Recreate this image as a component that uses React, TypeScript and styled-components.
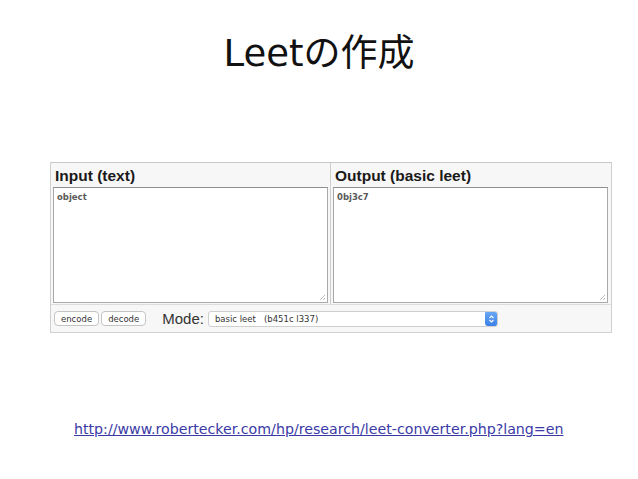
import React from "react";
import styled, { createGlobalStyle } from "styled-components";

const Global = createGlobalStyle`
  html, body { margin: 0; padding: 0; background: #ffffff; }
  #root { width: 638px; height: 479px; overflow: hidden; }
`;

const Slide = styled.div`
  width: 638px;
  height: 479px;
  display: flex;
  flex-direction: column;
  align-items: flex-start;
  background: #fff;
`;

const Title = styled.h1`
  margin: 31px 0 0 0;
  width: 638px;
  text-align: center;
  font-family: "DejaVu Sans", "Noto Sans CJK JP", sans-serif;
  font-weight: 400;
  font-size: 37px;
  line-height: 45px;
  color: #111;
`;

const Panel = styled.div`
  margin: 86px 0 0 50px;
  width: 560px;
  border: 1px solid #d0d0d0;
  border-top-color: #c8c8c8;
  background: #f7f7f7;
  display: flex;
  flex-direction: column;
`;

const Columns = styled.div`
  display: grid;
  grid-template-columns: 280px 280px;
`;

const Column = styled.div<{ $divider?: boolean }>`
  display: flex;
  flex-direction: column;
  padding: 0 3px 1px 2px;
  border-left: ${(p) => (p.$divider ? "1px solid #cfcfcf" : "none")};
  margin-left: ${(p) => (p.$divider ? "-1px" : "0")};
`;

const Label = styled.div`
  height: 24px;
  display: flex;
  align-items: center;
  padding-left: 2px;
  padding-top: 2px;
  box-sizing: border-box;
  font-family: "Liberation Sans", Arial, sans-serif;
  font-weight: 700;
  font-size: 15.5px;
  color: #1a1a1a;
`;

const TextBox = styled.div`
  position: relative;
  height: 106px;
  border: 1px solid #a9a9a9;
  border-top-color: #8f8f8f;
  background: #fff;
  padding: 4px 3px;
  box-sizing: content-box;
  font-family: "DejaVu Sans", Verdana, sans-serif;
  font-size: 8.5px;
  font-weight: 700;
  color: #5a5a5a;
`;

const Grip = styled.svg`
  position: absolute;
  right: 1px;
  bottom: 1px;
`;

const BottomBar = styled.div`
  height: 27px;
  border-top: 1px solid #dcdcdc;
  display: flex;
  align-items: center;
  padding-left: 3px;
  gap: 2px;
`;

const Button = styled.div`
  height: 13px;
  padding: 0 6px;
  border: 1px solid #c4c4c4;
  border-radius: 4px;
  background: #fff;
  display: flex;
  align-items: center;
  font-family: "DejaVu Sans", Verdana, sans-serif;
  font-size: 8.5px;
  color: #333;
`;

const ModeLabel = styled.div`
  margin-left: 14px;
  font-family: "Liberation Sans", Arial, sans-serif;
  font-size: 15px;
  color: #333;
`;

const Select = styled.div`
  margin-left: 2px;
  width: 288px;
  height: 14px;
  border: 1px solid #cfcfcf;
  border-radius: 3px;
  background: #fff;
  display: flex;
  align-items: center;
  font-family: "DejaVu Sans", Verdana, sans-serif;
  font-size: 8.5px;
  color: #333;
  overflow: hidden;
`;

const SelectText = styled.span`
  flex: 1;
  padding-left: 6px;
  white-space: pre;
`;

const Stepper = styled.div`
  width: 13px;
  height: 15px;
  margin-right: -1px;
  border-radius: 3px;
  background: linear-gradient(#6aa7f5, #3b82e8);
  display: flex;
  align-items: center;
  justify-content: center;
`;

const Url = styled.a`
  margin: 87px 0 0 74px;
  font-family: "DejaVu Sans", Verdana, sans-serif;
  font-size: 14.2px;
  color: #3a3aa6;
  text-decoration: underline;
  line-height: 18px;
`;

const ResizeGrip = () => (
  <Grip width="8" height="8" viewBox="0 0 8 8">
    <path d="M7 2 L2 7 M7 5 L5 7" stroke="#b0b0b0" strokeWidth="0.8" />
  </Grip>
);

export default function App() {
  return (
    <>
      <Global />
      <Slide>
        <Title>Leetの作成</Title>
        <Panel>
          <Columns>
            <Column>
              <Label>Input (text)</Label>
              <TextBox>
                object
                <ResizeGrip />
              </TextBox>
            </Column>
            <Column $divider>
              <Label>Output (basic leet)</Label>
              <TextBox>
                0bj3c7
                <ResizeGrip />
              </TextBox>
            </Column>
          </Columns>
          <BottomBar>
            <Button>encode</Button>
            <Button>decode</Button>
            <ModeLabel>Mode:</ModeLabel>
            <Select>
              <SelectText>basic leet   (b451c l337)</SelectText>
              <Stepper>
                <svg width="7" height="10" viewBox="0 0 7 10">
                  <path d="M1.5 4 L3.5 2 L5.5 4 M1.5 6 L3.5 8 L5.5 6" stroke="#fff" strokeWidth="1.1" fill="none" />
                </svg>
              </Stepper>
            </Select>
          </BottomBar>
        </Panel>
        <Url href="#">http://www.robertecker.com/hp/research/leet-converter.php?lang=en</Url>
      </Slide>
    </>
  );
}
